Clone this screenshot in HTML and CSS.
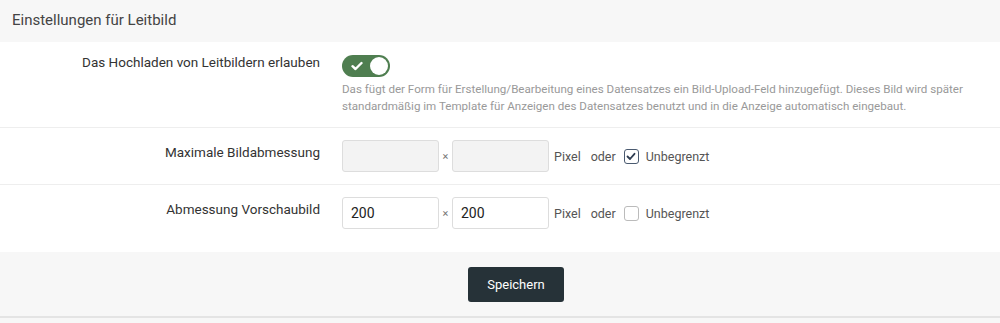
FILE: index.html
```html
<!DOCTYPE html>
<html lang="de">
<head>
    <meta charset="UTF-8">
    <title>Einstellungen für Leitbild</title>
    <link rel="stylesheet" href="styles.css">
</head>
<body>
    <div class="panel">
        <div class="panel-head">Einstellungen für Leitbild</div>

        <div class="form-row row-toggle">
            <div class="form-label">Das Hochladen von Leitbildern erlauben</div>
            <div class="form-field">
                <span class="switch">
                    <svg class="switch-check" width="12" height="10" viewBox="0 0 12 10"><path d="M1.5 5.2 L4.5 8 L10.5 2" fill="none" stroke="#fff" stroke-width="2.4" stroke-linecap="round" stroke-linejoin="round"/></svg>
                    <span class="switch-knob"></span>
                </span>
                <p class="help">Das fügt der Form für Erstellung/Bearbeitung eines Datensatzes ein Bild-Upload-Feld hinzugefügt. Dieses Bild wird später standardmäßig im Template für Anzeigen des Datensatzes benutzt und in die Anzeige automatisch eingebaut.</p>
            </div>
        </div>

        <div class="form-row">
            <div class="form-label">Maximale Bildabmessung</div>
            <div class="form-field dims">
                <input class="dim-input" type="text" disabled>
                <span class="times">×</span>
                <input class="dim-input" type="text" disabled>
                <span class="unit">Pixel</span>
                <span class="unit">oder</span>
                <label class="check"><span class="box checked"><svg width="10" height="9" viewBox="0 0 10 9"><path d="M1.5 4.5 L4 7 L8.5 1.8" fill="none" stroke="#2f3d52" stroke-width="1.8" stroke-linecap="round" stroke-linejoin="round"/></svg></span>Unbegrenzt</label>
            </div>
        </div>

        <div class="form-row row-last">
            <div class="form-label">Abmessung Vorschaubild</div>
            <div class="form-field dims">
                <input class="dim-input" type="text" value="200">
                <span class="times">×</span>
                <input class="dim-input" type="text" value="200">
                <span class="unit">Pixel</span>
                <span class="unit">oder</span>
                <label class="check"><span class="box"></span>Unbegrenzt</label>
            </div>
        </div>

        <div class="panel-foot">
            <button class="btn-save">Speichern</button>
        </div>
    </div>
</body>
</html>
```

FILE: styles.css
```css
body {
    margin: 0;
    padding: 0;
    font-family: Roboto, "Liberation Sans", sans-serif;
    color: #333;
    background-color: #f7f7f7;
}

.panel {
    background-color: #fff;
    border-bottom: 2px solid #e4e4e4;
}

.panel-head {
    height: 42px;
    box-sizing: border-box;
    padding: 11px 12px 0;
    background-color: #f7f7f7;
    font-size: 15px;
    color: #444;
}

/* Zeilen des Formulars */
.form-row {
    display: grid;
    grid-template-columns: 320px 1fr;
    column-gap: 22px;
    padding: 12px 0;
    border-top: 1px solid #eee;
}

.row-toggle {
    padding: 13px 0 12px;
    border-top: none;
}

.row-last {
    padding-bottom: 23px;
}

.form-label {
    text-align: right;
    font-size: 13.5px;
    line-height: 20px;
    padding-top: 2px;
    color: #333;
}

.row-toggle .form-label {
    padding-top: 0;
    margin-top: -3px;
}

.form-field {
    min-width: 0;
}

.switch {
    display: flex;
    align-items: center;
    justify-content: space-between;
    width: 48px;
    height: 22px;
    box-sizing: border-box;
    padding: 0 2px 0 9px;
    border-radius: 11px;
    background-color: #4f7e50;
}

.switch-knob {
    width: 18px;
    height: 18px;
    border-radius: 50%;
    background-color: #fff;
}

.help {
    margin: 4px 0 0;
    font-size: 11.6px;
    line-height: 17px;
    color: #999;
    max-width: 640px;
}

.dims {
    display: flex;
    align-items: center;
    font-size: 12.5px;
    color: #555;
}

.dim-input {
    width: 97px;
    height: 32px;
    box-sizing: border-box;
    border: 1px solid #ddd;
    border-radius: 3px;
    padding: 0 8px;
    font-family: inherit;
    font-size: 14px;
    color: #222;
    background-color: #fff;
}

.dim-input:disabled {
    background-color: #f3f3f3;
}

.times {
    width: 13px;
    text-align: center;
    font-size: 11px;
    color: #777;
}

.unit {
    margin-left: 5px;
    margin-right: 5px;
}

.check {
    display: flex;
    align-items: center;
    gap: 7px;
    margin-left: 3px;
}

.box {
    width: 13px;
    height: 13px;
    border: 1px solid #bbb;
    border-radius: 3px;
    display: flex;
    align-items: center;
    justify-content: center;
    background-color: #fff;
}

.box.checked {
    border-color: #4a5a70;
}

/* Knopf sitzt etwas rechts von der Mitte */
.panel-foot {
    display: flex;
    justify-content: center;
    padding: 15px 0 14px 32px;
    background-color: #f7f7f7;
}

.btn-save {
    width: 96px;
    height: 35px;
    border: none;
    border-radius: 3px;
    background-color: #263238;
    color: #fff;
    font-family: inherit;
    font-size: 13px;
    cursor: pointer;
}
```
